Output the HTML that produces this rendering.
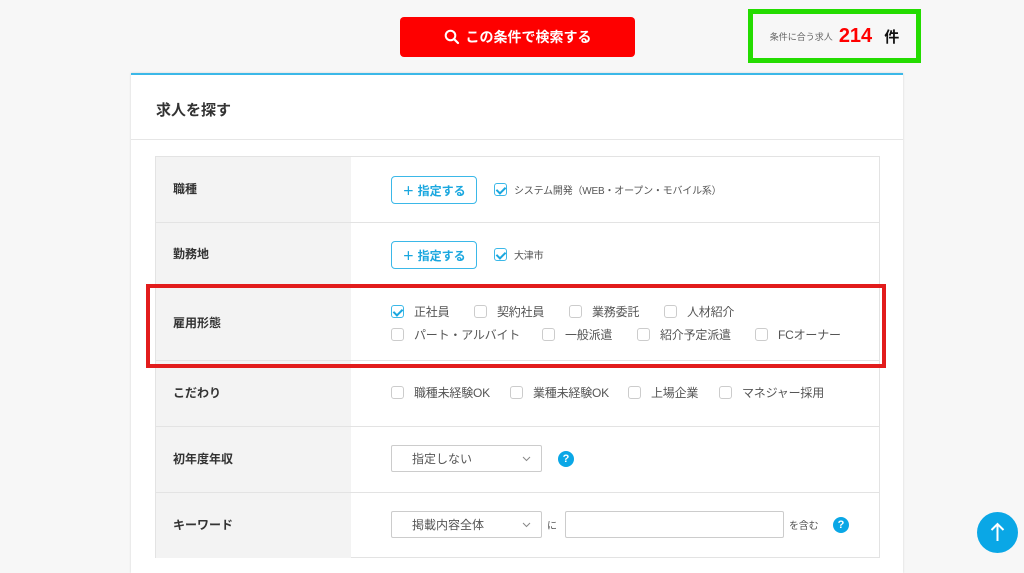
<!DOCTYPE html>
<html><head><meta charset="utf-8"><style>
*{box-sizing:border-box;margin:0;padding:0}
body{width:1024px;height:569px;overflow:hidden;background:#f7f7f7;font-family:"Liberation Sans","Noto Sans CJK JP",sans-serif;position:relative;color:#333}
.abs{position:absolute}
.btn{left:400px;top:17px;width:235px;height:40px;background:#fe0000;border-radius:4px;color:#fff;font-weight:bold;font-size:14px;display:flex;align-items:center;justify-content:center;gap:6px}
.green{left:748px;top:9px;width:173px;height:54px;border:5px solid #24dc00;display:flex;align-items:center;justify-content:center}
.card{left:131px;top:73px;width:772px;height:500px;background:#fff;border-top:2px solid #3bb8e8;box-shadow:0 0 2px rgba(0,0,0,.15)}
.title{left:156px;top:99px;font-size:15px;font-weight:bold;color:#333}
.hr{left:131px;top:139px;width:772px;height:1px;background:#e6e6e6}
.tbl{left:155px;top:156px;width:725px;height:402px;border:1px solid #e3e3e3}
.row{position:absolute;left:0;width:723px;border-bottom:1px solid #e3e3e3}
.lab{position:absolute;left:0;top:0;bottom:2px;width:195px;background:#f3f3f3;font-size:12px;font-weight:bold;padding-left:17px;display:flex;align-items:center}
.row .lab{bottom:0;padding-bottom:3px}
.pick{position:absolute;width:86px;height:28px;border:1px solid #3bb8e8;border-radius:4px;color:#1aa7df;font-size:12px;font-weight:bold;display:flex;align-items:center;justify-content:center;background:#fff}
.cb{display:inline-block;width:13px;height:13px;border:1px solid #ccc;border-radius:3px;background:#fff;vertical-align:middle;position:relative}
.cb.on{border-color:#3bb8e8}
.cb.on:after{content:"";position:absolute;left:3px;top:1px;width:4px;height:7px;border:solid #1aa7df;border-width:0 2px 2px 0;transform:rotate(45deg)}
.it{position:absolute;font-size:12px;color:#555;display:flex;align-items:center;gap:10px;white-space:nowrap;letter-spacing:-0.2px}
.sel{position:absolute;height:27px;border:1px solid #ccc;border-radius:2px;background:#fff;font-size:12px;color:#555;padding-left:20px;display:flex;align-items:center}
.chev{position:absolute;right:10px;top:10px}
.q{position:absolute;width:16px;height:16px;border-radius:50%;background:#0aa7e6;color:#fff;font-size:11px;font-weight:bold;text-align:center;line-height:16px}
</style></head><body>
<div class="abs btn"><svg width="16" height="16" viewBox="0 0 16 16"><circle cx="6.5" cy="6.5" r="4.8" fill="none" stroke="#fff" stroke-width="2"/><path d="M10 10l4 4" stroke="#fff" stroke-width="2.2" stroke-linecap="round"/></svg>この条件で検索する</div>
<div class="abs green"><span style="font-size:9px;color:#666">条件に合う求人</span><span style="color:#f00;font-size:20px;font-weight:bold;margin:0 12px 0 6px">214</span><span style="font-size:15px;font-weight:bold;color:#111">件</span></div>
<div class="abs card"></div>
<div class="abs title">求人を探す</div>
<div class="abs hr"></div>
<div class="abs tbl">
 <div class="row" style="top:0;height:66px"><div class="lab">職種</div>
  <div class="pick" style="left:235px;top:19px">＋ 指定する</div>
  <div class="it" style="left:338px;top:25px;font-size:10px;gap:7px"><span class="cb on"></span>システム開発（WEB・オープン・モバイル系）</div></div>
 <div class="row" style="top:66px;height:65px"><div class="lab">勤務地</div>
  <div class="pick" style="left:235px;top:18px">＋ 指定する</div>
  <div class="it" style="left:338px;top:24px;font-size:10px;gap:7px"><span class="cb on"></span>大津市</div></div>
 <div class="row" style="top:131px;height:73px"><div class="lab">雇用形態</div>
  <div class="it" style="left:235px;top:15px"><span class="cb on"></span>正社員</div>
  <div class="it" style="left:318px;top:15px"><span class="cb"></span>契約社員</div>
  <div class="it" style="left:413px;top:15px"><span class="cb"></span>業務委託</div>
  <div class="it" style="left:508px;top:15px"><span class="cb"></span>人材紹介</div>
  <div class="it" style="left:235px;top:38px"><span class="cb"></span>パート・アルバイト</div>
  <div class="it" style="left:386px;top:38px"><span class="cb"></span>一般派遣</div>
  <div class="it" style="left:481px;top:38px"><span class="cb"></span>紹介予定派遣</div>
  <div class="it" style="left:599px;top:38px"><span class="cb"></span>FCオーナー</div></div>
 <div class="row" style="top:204px;height:66px"><div class="lab">こだわり</div>
  <div class="it" style="left:235px;top:23px"><span class="cb"></span>職種未経験OK</div>
  <div class="it" style="left:354px;top:23px"><span class="cb"></span>業種未経験OK</div>
  <div class="it" style="left:472px;top:23px"><span class="cb"></span>上場企業</div>
  <div class="it" style="left:563px;top:23px"><span class="cb"></span>マネジャー採用</div></div>
 <div class="row" style="top:270px;height:66px"><div class="lab">初年度年収</div>
  <div class="sel" style="left:235px;top:18px;width:151px">指定しない<svg class="chev" width="9" height="6" viewBox="0 0 9 6"><path d="M1 1l3.5 3.5L8 1" fill="none" stroke="#888" stroke-width="1"/></svg></div>
  <div class="q" style="left:402px;top:24px">?</div></div>
 <div class="row" style="top:336px;height:65px;border-bottom:none"><div class="lab">キーワード</div>
  <div class="sel" style="left:235px;top:18px;width:151px">掲載内容全体<svg class="chev" width="9" height="6" viewBox="0 0 9 6"><path d="M1 1l3.5 3.5L8 1" fill="none" stroke="#888" stroke-width="1"/></svg></div>
  <div class="it" style="left:391px;top:24px;font-size:10px">に</div>
  <div style="position:absolute;left:409px;top:18px;width:219px;height:27px;border:1px solid #ccc;border-radius:2px;background:#fff"></div>
  <div class="it" style="left:633px;top:24px;font-size:10px">を含む</div>
  <div class="q" style="left:677px;top:24px">?</div></div>
</div>
<div class="abs" style="left:146px;top:284px;width:740px;height:84px;border:4px solid #e21c1c"></div>
<div class="abs" style="left:977px;top:512px;width:41px;height:41px;border-radius:50%;background:#0aa7e6"><svg width="41" height="41" viewBox="0 0 41 41"><path d="M20.5 29V12M14.5 18l6-6 6 6" fill="none" stroke="#fff" stroke-width="2"/></svg></div>
</body></html>
